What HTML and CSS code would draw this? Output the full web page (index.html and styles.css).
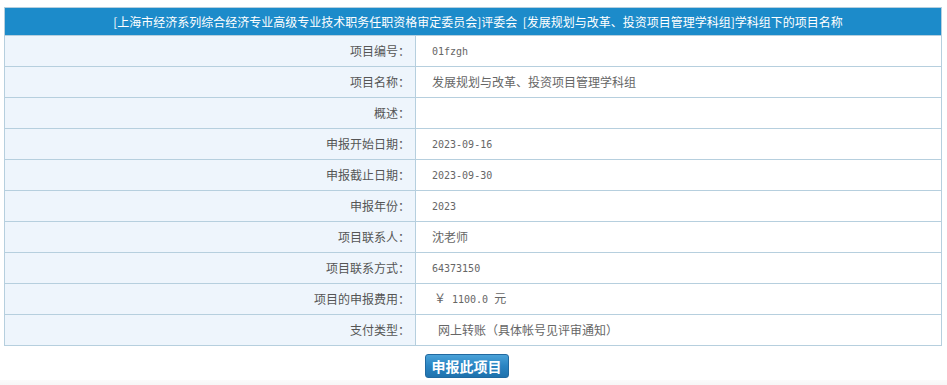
FILE: index.html
```html
<!DOCTYPE html>
<html lang="zh-CN">
<head>
  <meta charset="UTF-8" />
  <title>项目信息</title>
  <link rel="stylesheet" href="styles.css">
</head>
<body>

  <div class="wrap">
    <table class="info">
      <tr>
        <th colspan="2" class="title">[上海市经济系列综合经济专业高级专业技术职务任职资格审定委员会]评委会 &nbsp;[发展规划与改革、投资项目管理学科组]学科组下的项目名称</th>
      </tr>
      <tr>
        <td class="label">项目编号：</td>
        <td class="value"><span class="num">01fzgh</span></td>
      </tr>
      <tr>
        <td class="label">项目名称：</td>
        <td class="value">发展规划与改革、投资项目管理学科组</td>
      </tr>
      <tr>
        <td class="label">概述：</td>
        <td class="value"></td>
      </tr>
      <tr>
        <td class="label">申报开始日期：</td>
        <td class="value"><span class="num">2023-09-16</span></td>
      </tr>
      <tr>
        <td class="label">申报截止日期：</td>
        <td class="value"><span class="num">2023-09-30</span></td>
      </tr>
      <tr>
        <td class="label">申报年份：</td>
        <td class="value"><span class="num">2023</span></td>
      </tr>
      <tr>
        <td class="label">项目联系人：</td>
        <td class="value">沈老师</td>
      </tr>
      <tr>
        <td class="label">项目联系方式：</td>
        <td class="value"><span class="num">64373150</span></td>
      </tr>
      <tr>
        <td class="label">项目的申报费用：</td>
        <td class="value"><span class="yen">￥</span><span class="num">1100.0</span><span class="unit">元</span></td>
      </tr>
      <tr>
        <td class="label">支付类型：</td>
        <td class="value pay">网上转账（具体帐号见评审通知）</td>
      </tr>
    </table>

    <div class="actions">
      <button class="btn" type="button">申报此项目</button>
    </div>
  </div>

  <div class="footer"></div>

</body>
</html>
```

FILE: styles.css
```css
body {
  margin: 0;
  background: #fff;
  font-family: "Noto Sans CJK SC", "Liberation Sans", sans-serif;
  font-size: 12px;
  color: #555;
}
.wrap {
  padding: 7px 5px 0 4px;
}
.info {
  width: 100%;
  border-collapse: collapse;
  border: 1px solid #b6cfde;
}
.info td {
  height: 30px;
  padding: 0;
  border: 1px solid #b6cfde;
  vertical-align: middle;
  line-height: 16px;
}
.title {
  height: 27px;
  padding: 0 0 0 10px;
  background: #1c8bca;
  color: #fff;
  font-weight: normal;
  font-size: 12px;
  text-align: center;
  border: 1px solid #b6cfde;
  border-bottom: none;
}
.label {
  width: 405px;
  background: #eef5fc;
  text-align: right;
  padding-right: 5px !important;
  color: #555;
}
.value {
  padding-left: 16px !important;
  color: #666;
}
.num {
  font-family: "DejaVu Sans Mono", monospace;
  font-size: 10px;
  color: #666;
}
.yen {
  margin-left: 2px;
  margin-right: 6px;
}
.unit {
  margin-left: 6px;
}
.pay {
  padding-left: 22px !important;
}
.actions {
  display: flex;
  justify-content: center;
  padding: 8px 13px 0 0;
}
.btn {
  width: 84px;
  height: 24px;
  padding: 0;
  border: 1px solid #2169a0;
  border-radius: 3px;
  background: linear-gradient(#4aa2d8, #2a84c2 50%, #1f72ad);
  color: #fff;
  font-family: "Noto Sans CJK SC", sans-serif;
  font-size: 14px;
  font-weight: bold;
  cursor: pointer;
}
.footer {
  margin-top: 2px;
  height: 10px;
  background: linear-gradient(#fbfbfb, #f3f3f3);
}
```
